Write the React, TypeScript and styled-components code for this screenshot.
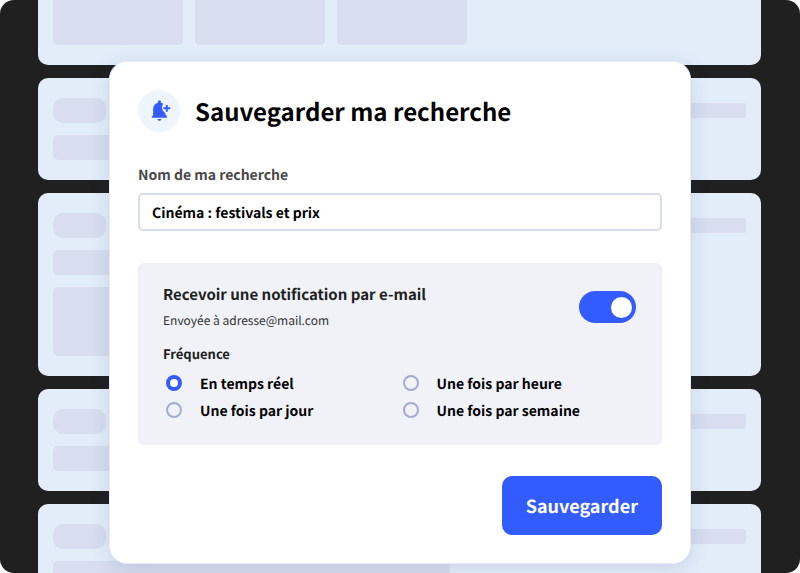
import React, { useState } from "react";
import styled, { createGlobalStyle } from "styled-components";

const BLUE = "#335cff";

const GlobalStyle = createGlobalStyle`
  *, *::before, *::after { box-sizing: border-box; }
  body { margin: 0; background: #fff; }
  body, input, button {
    font-family: "Noto Sans CJK SC", "Noto Sans", sans-serif;
    text-rendering: geometricPrecision;
  }
`;

const Page = styled.div`
  position: relative;
  min-height: 100vh;
  padding: 61px 38px 8px;
  border-radius: 14px;
  overflow: hidden;
  background: #202020;
`;

const Backdrop = styled.div`
  position: absolute;
  inset: 0;
  padding: 0 39px 0 38px;
  overflow: hidden;
  display: flex;
  flex-direction: column;
  gap: 13px;
`;

const Card = styled.div`
  flex: none;
  display: flex;
  justify-content: space-between;
  padding: 20px 15px;
  border-radius: 10px;
  background: #e3edfa;
`;

const TopCard = styled(Card)`
  justify-content: flex-start;
  gap: 12px;
  padding-top: 0;
  border-radius: 0 0 10px 10px;
`;

const Lines = styled.div`
  flex: 0 1 397px;
  display: flex;
  flex-direction: column;
  gap: 12px;
`;

const Block = styled.div<{ $w?: string; $h: number; $radius?: string }>`
  width: ${(p) => p.$w ?? "100%"};
  height: ${(p) => p.$h}px;
  border-radius: ${(p) => p.$radius ?? "5px"};
  background: #d8def0;
`;

const SideBlock = styled(Block)`
  margin-top: 5px;
`;

const Modal = styled.form`
  position: relative;
  max-width: 582px;
  margin: 0 auto;
  padding: 28px;
  border: 1px solid #e6ebfb;
  border-radius: 18px;
  background: #fff;
  box-shadow: 0 4px 20px rgba(32, 48, 96, 0.14);
`;

const Header = styled.header`
  display: flex;
  align-items: center;
  gap: 15px;
`;

const IconDisc = styled.span`
  flex: none;
  display: grid;
  place-items: center;
  width: 42px;
  height: 42px;
  border-radius: 50%;
  background: #eef5ff;
`;

const Title = styled.h1`
  margin: 0;
  font-size: 24px;
  line-height: 40px;
  font-weight: 700;
  color: #000;
`;

const FieldLabel = styled.label`
  display: block;
  margin-top: 32px;
  font-size: 14px;
  line-height: 22px;
  font-weight: 700;
  color: #484848;
`;

const TextInput = styled.input`
  display: block;
  width: 100%;
  height: 38px;
  margin-top: 7px;
  padding: 2px 12px 0;
  border: 2px solid #d7dced;
  border-radius: 5px;
  background: #fff;
  font-size: 14px;
  font-weight: 700;
  color: #000;
  outline: none;
`;

const Panel = styled.section`
  margin-top: 32px;
  padding: 20px 26px 20px 25px;
  border-radius: 6px;
  background: #f1f2f8;
`;

const PanelTop = styled.div`
  display: flex;
  align-items: center;
  justify-content: space-between;
`;

const PanelTitle = styled.label`
  display: block;
  font-size: 15px;
  line-height: 24px;
  font-weight: 700;
  color: #202020;
`;

const Hint = styled.p`
  margin: 4px 0 0;
  font-size: 12px;
  line-height: 20px;
  color: #303030;
`;

const Switch = styled.input`
  appearance: none;
  flex: none;
  display: flex;
  align-items: center;
  width: 57px;
  height: 32px;
  margin: 0;
  padding: 0 4px;
  border-radius: 16px;
  background: #a2acd0;
  cursor: pointer;
  &::before {
    content: "";
    width: 21px;
    height: 21px;
    border-radius: 50%;
    background: #fff;
  }
  &:checked {
    justify-content: flex-end;
    background: ${BLUE};
  }
`;

const Frequency = styled.fieldset`
  margin: 13px 0 0;
  padding: 0;
  border: 0;
`;

const Legend = styled.legend`
  padding: 0;
  font-size: 13px;
  line-height: 20px;
  font-weight: 700;
  color: #202020;
`;

const Options = styled.div`
  display: grid;
  grid-template-columns: repeat(2, 1fr);
  margin-top: 7px;
`;

const Option = styled.label`
  display: flex;
  align-items: flex-start;
  gap: 18px;
  padding-left: 3px;
  font-size: 14px;
  line-height: 27px;
  font-weight: 700;
  color: #000;
`;

const Radio = styled.input`
  appearance: none;
  flex: none;
  width: 16px;
  height: 16px;
  margin: 4px 0 0;
  border: 2px solid #a2acd0;
  border-radius: 50%;
  &:checked {
    border: 4px solid ${BLUE};
    background: #fff;
  }
`;

const Footer = styled.footer`
  display: flex;
  justify-content: flex-end;
  margin-top: 31px;
`;

const SaveButton = styled.button`
  height: 59px;
  padding: 0 24px;
  border: 0;
  border-radius: 10px;
  background: ${BLUE};
  font-size: 18px;
  font-weight: 700;
  color: #fff;
  cursor: pointer;
`;

const BellPlus = () => (
  <svg width="24" height="22" viewBox="0 0 24 22" fill={BLUE} aria-hidden="true">
    <path d="M12.400.2a1.500 1.500 0 0 1 1.500 1.500v1c.9.2 1.700.6 2.300 1.100a6.300 6.300 0 0 0 1.900 9.200c.2 1 .5 2 .9 2.800h.3c1 0 1 2 0 2H5.500c-1 0-1-2 0-2h.6V9c0-3 2-5.600 4.800-6.300v-1A1.500 1.500 0 0 1 12.400.2z" />
    <path d="M10.400 19h4c-.3 1.200-1 1.800-2 1.800s-1.700-.6-2-1.800z" />
    <path d="M18.800 4.900h2v2.400h2.400v2h-2.400v2.400h-2V9.300h-2.400v-2h2.400z" />
  </svg>
);

const OPTIONS = [
  "En temps réel",
  "Une fois par heure",
  "Une fois par jour",
  "Une fois par semaine",
];

const Result = ({ tall = false }: { tall?: boolean }) => (
  <Card>
    <Lines>
      <Block $w="53px" $h={25} $radius="10px" />
      <Block $h={25} />
      {tall && <Block $h={69} />}
    </Lines>
    <SideBlock $w="100px" $h={15} $radius="3px" />
  </Card>
);

export default function App() {
  const [name, setName] = useState("Cinéma : festivals et prix");
  const [notify, setNotify] = useState(true);
  const [frequency, setFrequency] = useState(OPTIONS[0]);

  return (
    <>
      <GlobalStyle />
      <Page>
        <Backdrop aria-hidden="true">
          <TopCard>
            <Block $w="130px" $h={45} $radius="0 0 5px 5px" />
            <Block $w="130px" $h={45} $radius="0 0 5px 5px" />
            <Block $w="130px" $h={45} $radius="0 0 5px 5px" />
          </TopCard>
          <Result />
          <Result tall />
          <Result />
          <Result />
        </Backdrop>
        <Modal onSubmit={(e) => e.preventDefault()}>
          <Header>
            <IconDisc>
              <BellPlus />
            </IconDisc>
            <Title>Sauvegarder ma recherche</Title>
          </Header>
          <FieldLabel htmlFor="name">Nom de ma recherche</FieldLabel>
          <TextInput id="name" value={name} onChange={(e) => setName(e.target.value)} />
          <Panel>
            <PanelTop>
              <div>
                <PanelTitle htmlFor="notify">Recevoir une notification par e-mail</PanelTitle>
                <Hint>Envoyée à adresse@mail.com</Hint>
              </div>
              <Switch
                id="notify"
                type="checkbox"
                role="switch"
                checked={notify}
                onChange={(e) => setNotify(e.target.checked)}
              />
            </PanelTop>
            <Frequency>
              <Legend>Fréquence</Legend>
              <Options>
                {OPTIONS.map((o) => (
                  <Option key={o}>
                    <Radio
                      type="radio"
                      name="frequency"
                      checked={frequency === o}
                      onChange={() => setFrequency(o)}
                    />
                    {o}
                  </Option>
                ))}
              </Options>
            </Frequency>
          </Panel>
          <Footer>
            <SaveButton type="submit">Sauvegarder</SaveButton>
          </Footer>
        </Modal>
      </Page>
    </>
  );
}
